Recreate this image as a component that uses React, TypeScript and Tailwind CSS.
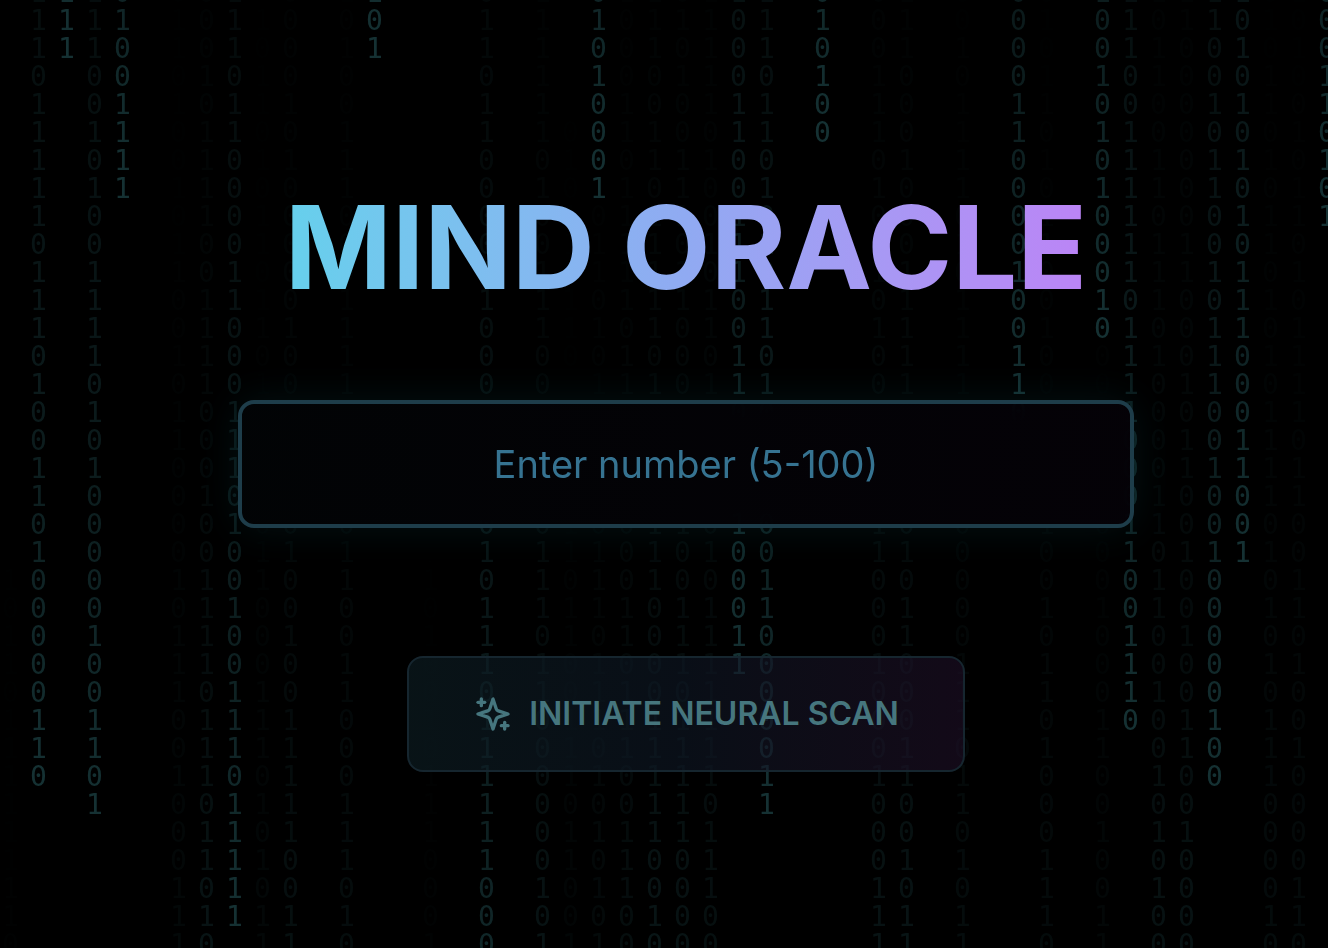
import { useState } from "react";

interface RainColumn {
  digits: string;
  head: number;
  tail?: number;
}

// head: row of the newest digit, may lie below the window once a drop has left it
// tail: where the drop before that one has got to, for the rows under the head
const columns: RainColumn[] = [
  { digits: "10110100101101010101010110111111110", head: 92 },
  { digits: "11101111101110100110100000110", head: 27 },
  { digits: "111", head: 1 },
  { digits: "111001010011110101000001001101", head: 28 },
  { digits: "01001111", head: 6 },
  { digits: "", head: 0 },
  { digits: "01101001011001011000010111001000111", head: 70 },
  { digits: "00010111100111100010011110111011010", head: 52 },
  { digits: "1110110000110001110100100111011111", head: 32 },
  { digits: "01011010110110100000110001110101011", head: 72 },
  { digits: "00001010000010000100100100111110011", head: 57 },
  { digits: "", head: 0 },
  { digits: "10100111000111110100110011000111010", head: 61 },
  { digits: "101", head: 1 },
  { digits: "", head: 0 },
  { digits: "01101101011011010110010100101110001", head: 88 },
  { digits: "", head: 0 },
  { digits: "01101100001100010010101110111111000", head: 38 },
  { digits: "", head: 0 },
  { digits: "11111101001110010110111011000000101", head: 53 },
  { digits: "01011010110110101101101100111011001", head: 76 },
  { digits: "01010001011010110110111011101010101", head: 6, tail: 67 },
  { digits: "10001101111101110110001101110011100", head: 60 },
  { digits: "11100110111110101101110000111110010", head: 51 },
  { digits: "01010011101100011011001110111110000", head: 53 },
  { digits: "11111010010110110110101111111011100", head: 57 },
  { digits: "1000110011100110110100011", head: 23 },
  { digits: "111011010101101011000110000011", head: 28 },
  { digits: "", head: 0 },
  { digits: "010100", head: 4 },
  { digits: "", head: 0 },
  { digits: "00011101001010010111100010001000111", head: 53 },
  { digits: "11100010001111101000101100011001011", head: 52 },
  { digits: "", head: 0 },
  { digits: "00101111010111101010000011101101011", head: 62 },
  { digits: "", head: 0 },
  { digits: "0000110000100110", head: 14 },
  { digits: "01011010110010010111001011010001110", head: 64 },
  { digits: "", head: 0 },
  { digits: "10010101000100011010001000110010011", head: 11, tail: 72 },
  { digits: "111001111110111100011001110", head: 25 },
  { digits: "10110011011101000011011001001010100", head: 54 },
  { digits: "11000000011000101100100100110010000", head: 53 },
  { digits: "11001011001011100100100000100", head: 27 },
  { digits: "101010101011100011001", head: 19 },
  { digits: "01011010110101011110101010111000010", head: 63 },
  { digits: "10100101101011110110011010010000110", head: 64 },
  { digits: "000110101", head: 7 },
];

const strength = (column: RainColumn, row: number) => {
  const from = row <= column.head ? column.head : column.tail ?? 90;
  return Math.max(0, 0.31 * Math.exp(-0.045 * (from - row)) - 0.01);
};

const MatrixRain = () => (
  <div aria-hidden="true" className="pointer-events-none absolute inset-0 overflow-hidden">
    <div className="-mt-[21px] ml-[2px] flex font-['DejaVu_Sans_Mono',monospace] text-[28px] leading-7 text-[#46a4aa]">
      {columns.map((column, c) => (
        <div key={c} className="w-7 shrink-0">
          {column.digits.split("").map((digit, i) => (
            <span key={i} className="block" style={{ opacity: strength(column, i - 1) }}>
              {digit}
            </span>
          ))}
        </div>
      ))}
    </div>
  </div>
);

const SparklesIcon = () => (
  <svg
    className="size-10 shrink-0"
    viewBox="0 0 24 24"
    fill="none"
    stroke="currentColor"
    strokeWidth="2"
    strokeLinecap="round"
    strokeLinejoin="round"
    aria-hidden="true"
  >
    <path d="m12 3-1.912 5.813a2 2 0 0 1-1.275 1.275L3 12l5.813 1.912a2 2 0 0 1 1.275 1.275L12 21l1.912-5.813a2 2 0 0 1 1.275-1.275L21 12l-5.813-1.912a2 2 0 0 1-1.275-1.275L12 3Z" />
    <path d="M5 3v4" />
    <path d="M19 17v4" />
    <path d="M3 5h4" />
    <path d="M17 19h4" />
  </svg>
);

export default function App() {
  const [value, setValue] = useState("");

  return (
    <div className="relative min-h-screen overflow-hidden bg-black font-[Inter,sans-serif]">
      <MatrixRain />
      <main className="relative flex min-h-screen flex-col items-center justify-center pt-3 pl-11">
        <h1 className="bg-linear-to-r from-[#65d0ec] via-[#90aaf2] to-[#bb84f6] bg-clip-text text-center text-[115px] leading-[120px] font-bold whitespace-nowrap text-transparent">
          MIND ORACLE
        </h1>
        <form
          className="mt-23 flex w-full max-w-4xl flex-col items-center gap-32"
          onSubmit={(e) => e.preventDefault()}
        >
          <input
            type="text"
            inputMode="numeric"
            aria-label="Number between 5 and 100"
            placeholder="Enter number (5-100)"
            value={value}
            onChange={(e) => setValue(e.target.value)}
            className="h-32 w-full rounded-2xl border-4 border-[#1e3d4a] bg-linear-to-r from-[#020406]/85 to-[#050208]/85 px-8 text-center text-[38px] text-cyan-100 shadow-[0_0_40px_rgba(34,211,238,0.08)] backdrop-blur-md outline-none placeholder:text-[#367391]"
          />
          <button
            type="submit"
            className="flex items-center gap-4 rounded-2xl border-2 border-[#16262f] bg-linear-to-r from-[#0e2026]/60 via-[#0f1826]/60 to-[#1f1028]/60 px-16 py-8 text-[32px] leading-[48px] font-semibold whitespace-nowrap text-[#46767e]"
          >
            <SparklesIcon />
            INITIATE NEURAL SCAN
          </button>
        </form>
      </main>
    </div>
  );
}
